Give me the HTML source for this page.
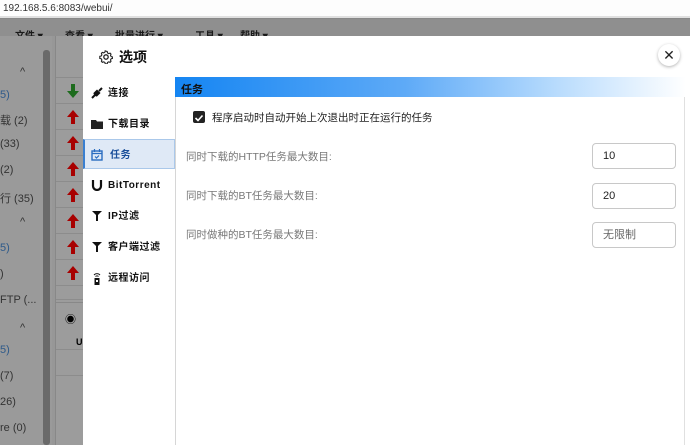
<!DOCTYPE html>
<html><head><meta charset="utf-8"><style>
*{margin:0;padding:0;box-sizing:border-box}
body{width:690px;height:445px;overflow:hidden;position:relative;background:#979797;font-family:"Liberation Sans","Noto Sans CJK SC",sans-serif;}
.a{position:absolute}
.addr{left:0;top:0;width:690px;height:18px;background:#fdfdfd;border-bottom:2px solid #e0e0e0;font-size:10px;color:#333;padding:3px 0 0 3px}
.menu{left:0;top:18px;width:690px;height:18px;background:#8f8f8f;border-top:1px solid #888}
.menu span{position:absolute;top:8px;font-size:10px;color:#1a1a1a;font-weight:bold}
.side{left:0;top:36px;width:52px;height:409px;background:#9a9a9a}
.side div{position:absolute;left:0;font-size:11px;color:#333}
.sb{left:43px;top:50px;width:7px;height:395px;background:#6a6a6a;border-radius:3px}
.list{left:55px;top:36px;width:28px;height:409px;background:#9c9c9c;border-left:1px solid #888}
.row{position:absolute;left:0;width:28px;border-bottom:1px solid #8c8c8c;height:26px}
.row svg{position:absolute;left:11px;top:6px}
.modal{left:83px;top:36px;width:607px;height:409px;background:#fff}
.nav div{position:absolute;left:0;width:92px;height:28px;font-size:10px;line-height:12px;font-weight:bold;color:#111;padding:8px 0 0 25px;letter-spacing:.5px}
.nav svg{position:absolute;left:8px;top:7px}
.in{position:absolute;left:592px;width:84px;height:26px;border:1px solid #c8c8c8;border-radius:4px;font-size:11px;line-height:14px;color:#222;padding:5px 0 0 10px}
.lbl{position:absolute;left:186px;font-size:10.5px;color:#777}
</style></head><body>
<div class="a addr">192.168.5.6:8083/webui/</div>
<div class="a menu"><span style="left:15px">文件 ▾</span><span style="left:65px">查看 ▾</span><span style="left:115px">批量进行 ▾</span><span style="left:195px">工具 ▾</span><span style="left:240px">帮助 ▾</span></div>
<div class="a side">
<div style="top:53px;color:#2e5a8a">5)</div>
<div style="top:76px">载 (2)</div>
<div style="top:102px">(33)</div>
<div style="top:128px">(2)</div>
<div style="top:154px">行 (35)</div>
<div style="top:180px;left:20px">^</div>
<div style="top:206px;color:#2e5a8a">5)</div>
<div style="top:232px">)</div>
<div style="top:258px">FTP (...</div>
<div style="top:286px;left:20px">^</div>
<div style="top:308px;color:#2e5a8a">5)</div>
<div style="top:334px">(7)</div>
<div style="top:360px">26)</div>
<div style="top:386px">re (0)</div>
<div style="top:30px;left:20px">^</div>
</div>
<div class="a sb"></div>
<div class="a list">
<div class="row" style="top:0;height:42px"></div>
<div class="row" style="top:42px"><svg width="12" height="14"><path d="M4 0h4v7h4L6 14 0 7h4z" fill="#1d6b1d"/></svg></div>
<div class="row" style="top:68px"><svg width="12" height="14"><path d="M4 14h4V7h4L6 0 0 7h4z" fill="#a80000"/></svg></div>
<div class="row" style="top:94px"><svg width="12" height="14"><path d="M4 14h4V7h4L6 0 0 7h4z" fill="#a80000"/></svg></div>
<div class="row" style="top:120px"><svg width="12" height="14"><path d="M4 14h4V7h4L6 0 0 7h4z" fill="#a80000"/></svg></div>
<div class="row" style="top:146px"><svg width="12" height="14"><path d="M4 14h4V7h4L6 0 0 7h4z" fill="#a80000"/></svg></div>
<div class="row" style="top:172px"><svg width="12" height="14"><path d="M4 14h4V7h4L6 0 0 7h4z" fill="#a80000"/></svg></div>
<div class="row" style="top:198px"><svg width="12" height="14"><path d="M4 14h4V7h4L6 0 0 7h4z" fill="#a80000"/></svg></div>
<div class="row" style="top:224px"><svg width="12" height="14"><path d="M4 14h4V7h4L6 0 0 7h4z" fill="#a80000"/></svg></div>
<div class="row" style="top:250px;height:14px"></div>
<div class="row" style="top:266px;height:48px;border-top:1px solid #888"><span style="position:absolute;left:9px;top:8px;font-size:11px">◉</span><span style="position:absolute;left:20px;top:34px;font-size:9px;font-weight:bold">UI</span></div>
<div class="row" style="top:314px"></div>
</div>
<div class="a modal">
<svg class="a" style="left:16px;top:14px" width="14" height="14" viewBox="0 0 14 14"><circle cx="7" cy="7" r="2.2" fill="none" stroke="#222" stroke-width="1.3"/><path d="M7 1.2l1.2.3.3 1.4 1.2.7 1.4-.5.9 1-.5 1.4.7 1.2 1.4.3v1.4l-1.4.3-.7 1.2.5 1.4-.9 1-1.4-.5-1.2.7-.3 1.4H6.2l-.3-1.4-1.2-.7-1.4.5-.9-1 .5-1.4-.7-1.2-1.4-.3V6.3l1.4-.3.7-1.2-.5-1.4.9-1 1.4.5 1.2-.7.3-1.4z" fill="none" stroke="#222" stroke-width="1.1"/></svg>
<div class="a" style="left:36px;top:11px;font-size:14px;font-weight:bold;color:#111">选项</div>
<div class="a" style="left:575px;top:8px;width:22px;height:22px;border-radius:11px;background:#fff;box-shadow:0 1px 3px rgba(0,0,0,.3);text-align:center;font-size:14px;line-height:22px;color:#222">✕</div>
<div class="nav">
<div style="top:44px"><svg width="12" height="12"><path d="M1 11l3-3M8 4l3-3M3 6l3 3M4 5l3 3" stroke="#111" stroke-width="2"/><rect x="3.5" y="3.5" width="5" height="5" transform="rotate(45 6 6)" fill="#111"/></svg>连接</div>
<div style="top:75px"><svg width="12" height="12"><path d="M0 2h5l1 1.5h6V11H0z" fill="#222"/></svg>下载目录</div>
<div style="top:103px;height:30px;background:#dfe9f6;border:1px solid #aac8ea;border-left:2px solid #3a7fd0;color:#1a4f9a;padding-top:10px"><svg width="12" height="12" style="left:6px;top:9px"><rect x="1" y="2" width="10" height="9" fill="none" stroke="#2a6cc0" stroke-width="1.4"/><path d="M1 4.5h10M3.5 0v3M8.5 0v3M4 7.5l1.5 1.5L8 6.5" stroke="#2a6cc0" stroke-width="1.2" fill="none"/></svg>任务</div>
<div style="top:136px"><svg width="12" height="12"><path d="M2 1v6a4 4 0 008 0V1" fill="none" stroke="#111" stroke-width="2.2"/></svg>BitTorrent</div>
<div style="top:167px"><svg width="12" height="12"><path d="M1 1h10L7 5v6H5V5z" fill="#111"/></svg>IP过滤</div>
<div style="top:198px"><svg width="12" height="12"><path d="M1 1h10L7 5v6H5V5z" fill="#111"/></svg>客户端过滤</div>
<div style="top:229px"><svg width="12" height="13"><path d="M3 3a4 4 0 016 0M4.5 4.5a2 2 0 013 0" stroke="#111" fill="none"/><rect x="3.5" y="6" width="5" height="7" fill="#111"/><rect x="5" y="8" width="2" height="2" fill="#fff"/></svg>远程访问</div>
</div>
<div class="a" style="left:92px;top:41px;width:511px;height:20px;background:linear-gradient(90deg,#1585f2 0%,#5eaaf7 45%,#b9dcfd 75%,#fff 100%);font-size:11px;font-weight:bold;color:#111;padding:4px 0 0 6px">任务</div>
<div class="a" style="left:92px;top:61px;width:1px;height:348px;background:#d6d6d6"></div>
<div class="a" style="left:601px;top:61px;width:1px;height:348px;background:#e0e0e0"></div>
</div>
<div class="a" style="left:193px;top:111px;width:12px;height:12px;background:#222;border-radius:2px"><svg width="12" height="12"><path d="M2.5 6l2.5 2.5L9.5 3.5" stroke="#fff" stroke-width="1.6" fill="none"/></svg></div>
<div class="a" style="left:212px;top:110px;font-size:10.5px;color:#222">程序启动时自动开始上次退出时正在运行的任务</div>
<div class="lbl" style="top:149px">同时下载的HTTP任务最大数目:</div>
<div class="lbl" style="top:188px">同时下载的BT任务最大数目:</div>
<div class="lbl" style="top:227px">同时做种的BT任务最大数目:</div>
<div class="in" style="top:143px">10</div>
<div class="in" style="top:183px">20</div>
<div class="in" style="top:222px;color:#666">无限制</div>
</body></html>
